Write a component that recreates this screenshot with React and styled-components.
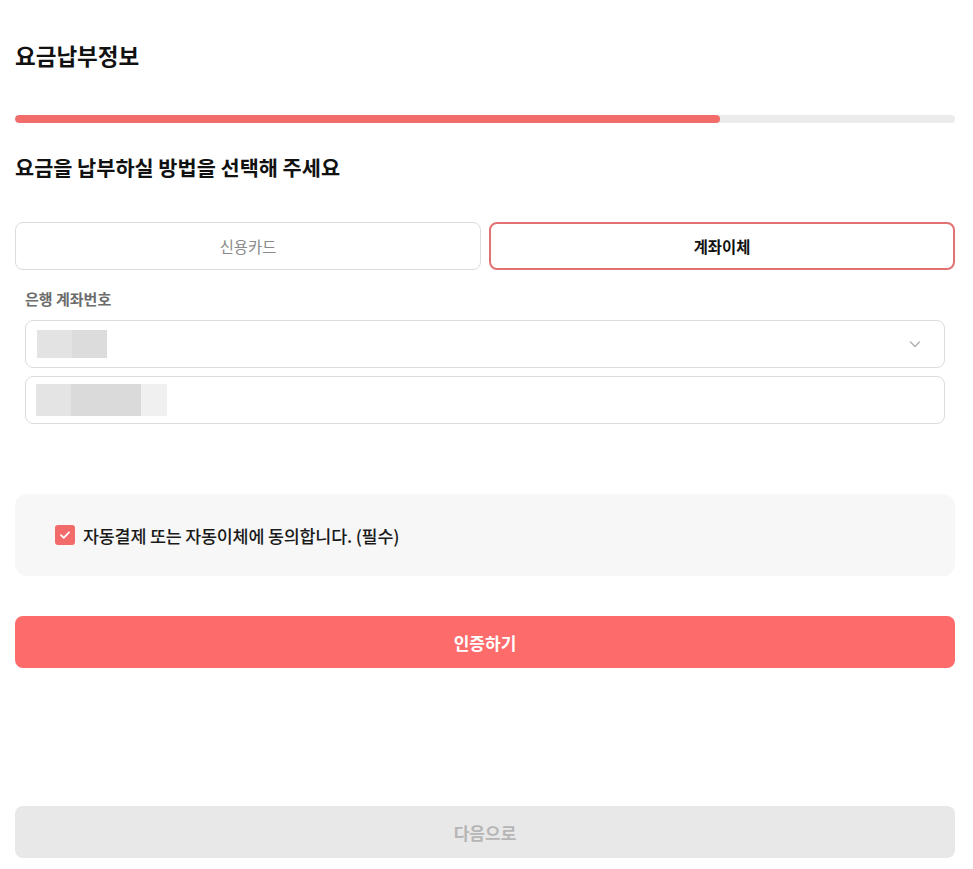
import React from 'react';
import styled, { createGlobalStyle } from 'styled-components';

const GlobalStyle = createGlobalStyle`
  body {
    margin: 0;
    background: #fff;
    font-family: "Noto Sans CJK KR", "Noto Sans", sans-serif;
    color: #111;
  }
`;

const Page = styled.div`
  padding: 40px 18px 11px 15px;
  display: flex;
  flex-direction: column;
`;

const Title = styled.h1`
  margin: 0;
  font-size: 22.5px;
  line-height: 30px;
  font-weight: 700;
  color: #111;
`;

const Progress = styled.div`
  margin-top: 45px;
  height: 8px;
  border-radius: 4px;
  background: #ececec;
  overflow: hidden;
`;

const ProgressFill = styled.div`
  height: 100%;
  border-radius: 4px;
  background: #f36c6c;
`;

const Subtitle = styled.h2`
  margin: 30px 0 0;
  font-size: 20.8px;
  line-height: 28px;
  font-weight: 700;
  color: #111;
`;

const Tabs = styled.div`
  margin-top: 41px;
  display: grid;
  grid-template-columns: 1fr 1fr;
  gap: 8px;
`;

const Tab = styled.button`
  height: 48px;
  border-radius: 8px;
  background: #fff;
  font-family: inherit;
  font-size: 15.4px;
  cursor: pointer;
  border: ${(p) => (p.$active ? '2px solid #e27272' : '1px solid #dcdcdc')};
  color: ${(p) => (p.$active ? '#111' : '#8a8a8a')};
  font-weight: ${(p) => (p.$active ? 700 : 400)};
`;

const Fields = styled.div`
  margin-top: 19px;
  padding: 0 10px;
  display: flex;
  flex-direction: column;
`;

const Label = styled.div`
  font-size: 15px;
  line-height: 20px;
  font-weight: 700;
  color: #6b6b6b;
  margin-bottom: 11px;
`;

const Field = styled.div`
  height: 48px;
  box-sizing: border-box;
  border: 1px solid #dcdcdc;
  border-radius: 8px;
  display: flex;
  align-items: center;
  padding: 0 22px 0 ${(p) => p.$pad}px;
  & + & {
    margin-top: 8px;
  }
`;

const Blur = styled.div`
  display: flex;
  height: ${(p) => p.$h}px;
`;

const BlurCell = styled.span`
  display: block;
  height: 100%;
  width: ${(p) => p.$w}px;
  background: ${(p) => p.$c};
`;

const Chevron = styled.svg`
  margin-left: auto;
`;

const AgreeBox = styled.div`
  margin-top: 70px;
  height: 82px;
  border-radius: 12px;
  background: #f7f7f7;
  display: flex;
  align-items: center;
  padding: 0 40px;
  gap: 8px;
`;

const Check = styled.span`
  width: 20px;
  height: 20px;
  border-radius: 3px;
  background: #f26a6a;
  display: flex;
  align-items: center;
  justify-content: center;
`;

const AgreeText = styled.span`
  font-size: 17.4px;
  font-weight: 500;
  color: #1a1a1a;
  letter-spacing: -0.2px;
`;

const Button = styled.button`
  height: 52px;
  border: none;
  border-radius: 8px;
  font-family: inherit;
  font-size: 17px;
  font-weight: 700;
  background: ${(p) => (p.$disabled ? '#e8e8e8' : '#fd6b6b')};
  color: ${(p) => (p.$disabled ? '#b6b6b6' : '#fff')};
  margin-top: ${(p) => p.$mt}px;
`;

export default () => (
  <>
    <GlobalStyle />
    <Page>
      <Title>요금납부정보</Title>
      <Progress>
        <ProgressFill style={{ width: '75%' }} />
      </Progress>
      <Subtitle>요금을 납부하실 방법을 선택해 주세요</Subtitle>
      <Tabs>
        <Tab>신용카드</Tab>
        <Tab $active>계좌이체</Tab>
      </Tabs>
      <Fields>
        <Label>은행 계좌번호</Label>
        <Field $pad={11}>
          <Blur $h={28}>
            <BlurCell $w={35} $c="#e3e3e3" />
            <BlurCell $w={35} $c="#dcdcdd" />
          </Blur>
          <Chevron width="14" height="14" viewBox="0 0 14 14" fill="none">
            <path d="M2.5 5l4.5 4.5L11.5 5" stroke="#b5b5b5" strokeWidth="1.6" strokeLinecap="round" strokeLinejoin="round" />
          </Chevron>
        </Field>
        <Field $pad={10}>
          <Blur $h={32}>
            <BlurCell $w={35} $c="#e4e4e4" />
            <BlurCell $w={70} $c="#dadada" />
            <BlurCell $w={26} $c="#f0f0f0" />
          </Blur>
        </Field>
      </Fields>
      <AgreeBox>
        <Check>
          <svg width="14" height="14" viewBox="0 0 14 14" fill="none">
            <path d="M3 7.2l2.7 2.6L11 4.3" stroke="#fff" strokeWidth="1.8" strokeLinecap="round" strokeLinejoin="round" />
          </svg>
        </Check>
        <AgreeText>자동결제 또는 자동이체에 동의합니다. (필수)</AgreeText>
      </AgreeBox>
      <Button $mt={40}>인증하기</Button>
      <Button $mt={138} $disabled>다음으로</Button>
    </Page>
  </>
);
